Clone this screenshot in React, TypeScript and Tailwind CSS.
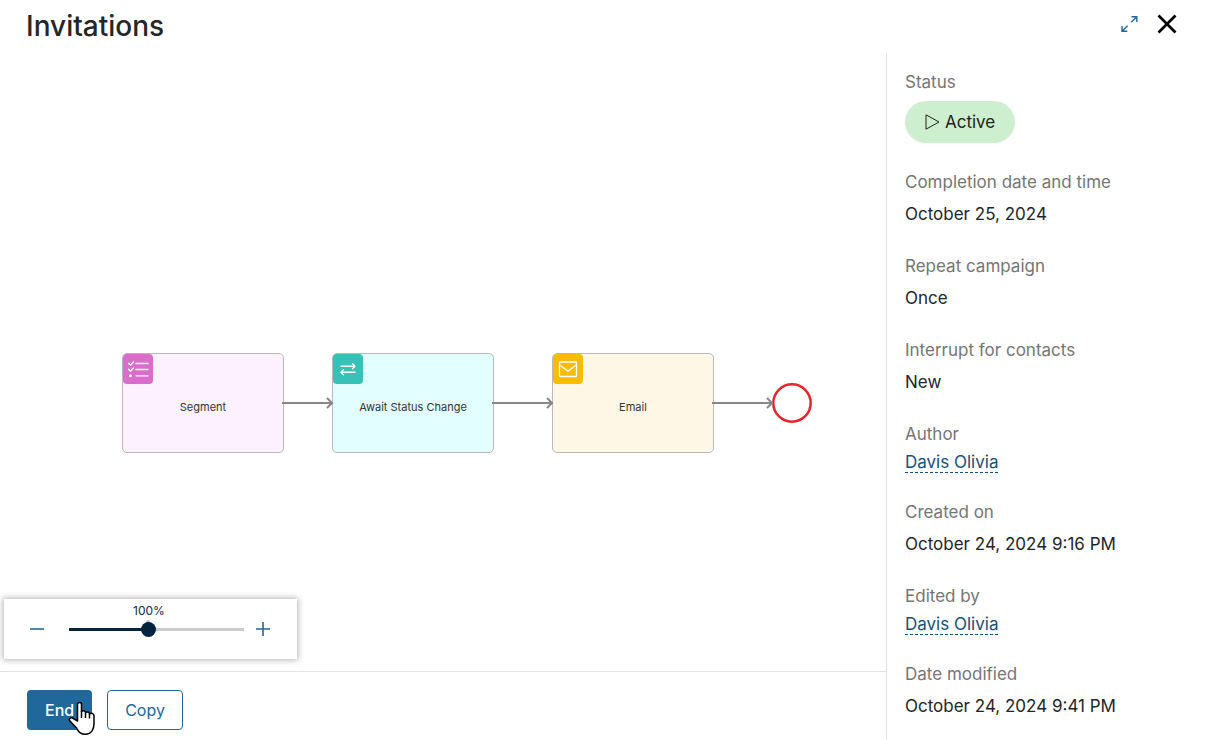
import { useState, type ReactNode } from "react";

function ChecklistIcon() {
  return (
    <svg width="30" height="30" viewBox="0 0 30 30" fill="none" stroke="white" strokeWidth="1.3" strokeLinecap="round" strokeLinejoin="round" aria-hidden="true">
      <path d="M5.500 9.200l2 2 3-3.200M5.500 15.200l2 2 3-3.200M13 9.500h12M13 15.500h12M13 21.800h12" />
      <circle cx="7.5" cy="21.800" r="0.9" fill="white" />
    </svg>
  );
}

function SwapIcon() {
  return (
    <svg width="30" height="30" viewBox="0 0 30 30" fill="none" stroke="white" strokeWidth="1.4" strokeLinecap="round" strokeLinejoin="round" aria-hidden="true">
      <path d="M8 12.200h14M19.500 9.700l2.500 2.500-2.500 2.500M22 18.300H8M10.500 15.800L8 18.300l2.500 2.500" />
    </svg>
  );
}

function MailIcon() {
  return (
    <svg width="30" height="30" viewBox="0 0 30 30" fill="none" stroke="white" strokeWidth="1.3" strokeLinejoin="round" aria-hidden="true">
      <rect x="6.500" y="8" width="17" height="14.500" rx="0.800" />
      <path d="M6.800 11l8.200 6.200 8.200-6.200" />
    </svg>
  );
}

type NodeProps = { label: string; place: string; tile: string; icon: ReactNode };

function CampaignNode({ label, place, tile, icon }: NodeProps) {
  return (
    <div className={`absolute top-[300px] flex h-[100px] w-[162px] items-center justify-center rounded-[5px] border border-[#b9b9b9] pt-2 ${place}`}>
      <span className={`absolute top-0 left-0 rounded-[4px] ${tile}`}>{icon}</span>
      <span className="text-[11px] leading-4 text-[#333333]">{label}</span>
    </div>
  );
}

function Connector({ place, length }: { place: string; length: number }) {
  return (
    <svg className={`absolute top-[343px] z-10 ${place}`} width={length} height="14" fill="none" stroke="#878787" strokeWidth="2" aria-hidden="true">
      <path d={`M0 7H${length - 1}M${length - 7} 2l5 5-5 5`} />
    </svg>
  );
}

function Field({ label, children }: { label: string; children: ReactNode }) {
  return (
    <div className="mb-[30px]">
      <dt className="text-[17px] leading-[22px] text-[#757575]">{label}</dt>
      {children}
    </div>
  );
}

function Value({ children }: { children: ReactNode }) {
  return <dd className="mt-[10px] text-[17px] leading-[22px] text-[#212529]">{children}</dd>;
}

function Person({ name }: { name: string }) {
  return (
    <dd className="mt-[6px] flex h-5 text-[17px] leading-[22px]">
      <a href="#" className="h-[22px] border-b border-dashed border-[#164f7a] text-[#164f7a]">{name}</a>
    </dd>
  );
}

function PointerHand() {
  return (
    <svg className="absolute top-[11px] left-[41px]" width="28" height="35" viewBox="0 0 28 35" aria-hidden="true">
      <path
        d="M9.500 3.500c0-2.700 4-2.700 4 0v7c1-1.200 3.700-1 4 1 1.200-1 3.700-.6 4 1.300 1.500-1 4.500-.4 4.500 2v8c0 5-2.500 10.500-8.500 10.500-5.500 0-7-3-9-6.300l-6.800-7.200c-1.200-2 .8-3.400 2.800-2.800l5 3z"
        fill="white" stroke="black" strokeWidth="1.500" strokeLinejoin="round"
      />
      <path d="M13.500 10v7M17.500 11.500V17M21.500 13v4.500" fill="none" stroke="black" strokeWidth="1.500" />
    </svg>
  );
}

const MIN = 10;
const MAX = 210;

function ZoomPanel() {
  const [zoom, setZoom] = useState(100);
  const filled = ((zoom - MIN) / (MAX - MIN)) * 100;
  return (
    <div className="absolute bottom-3 left-1 z-20 flex h-[60px] w-[293px] items-center bg-white px-[23px] shadow-[0_0_6px_1px_rgba(0,0,0,0.3)]">
      <button type="button" aria-label="Zoom out" onClick={() => setZoom(Math.max(MIN, zoom - 10))} className="flex h-5 w-5 justify-center text-[#20689b]">
        <svg width="16" height="20" fill="none" stroke="currentColor" strokeWidth="1.600" aria-hidden="true">
          <path d="M1 10h14" />
        </svg>
      </button>
      <div className="relative mr-[9px] ml-[22px] flex h-5 w-[175px] items-center">
        <label htmlFor="zoom" className="absolute -top-4 left-16 text-xs leading-4 text-[#0b2a4a]">{zoom}%</label>
        <span className="absolute top-px left-[77px] h-1 w-1 rounded-full bg-[#bfbfbf]" />
        <input
          id="zoom"
          type="range"
          min={MIN}
          max={MAX}
          value={zoom}
          onChange={(event) => setZoom(Number(event.target.value))}
          style={{ backgroundImage: `linear-gradient(to right, #03233f ${filled}%, #cbcbcb ${filled}%)` }}
          className="relative h-[3px] w-full appearance-none [&::-webkit-slider-thumb]:h-[15px] [&::-webkit-slider-thumb]:w-[15px] [&::-webkit-slider-thumb]:appearance-none [&::-webkit-slider-thumb]:rounded-full [&::-webkit-slider-thumb]:bg-[#03233f]"
        />
      </div>
      <button type="button" aria-label="Zoom in" onClick={() => setZoom(Math.min(MAX, zoom + 10))} className="flex h-5 w-5 justify-center text-[#20689b]">
        <svg width="16" height="20" fill="none" stroke="currentColor" strokeWidth="1.600" aria-hidden="true">
          <path d="M1 10h14M8 3v14" />
        </svg>
      </button>
    </div>
  );
}

export default function App() {
  return (
    <div className="flex min-h-screen flex-col bg-white font-['Inter',sans-serif] text-[#212529]">
      <header className="flex h-[53px] items-center justify-between pr-[30px] pb-1.5 pl-[26px]">
        <h1 className="pt-1 text-[28px] leading-8 font-medium text-[#262626]">Invitations</h1>
        <div className="flex items-center gap-[18px]">
          <button type="button" aria-label="Expand" className="text-[#20689b]">
            <svg width="18" height="18" viewBox="0 0 18 18" fill="none" stroke="currentColor" strokeWidth="1.400" aria-hidden="true">
              <path d="M10.500 1.700h5.300V7M15.800 1.700l-5.600 5.600M1 11v5.300h5.300M1 16.300l5.600-5.600" />
            </svg>
          </button>
          <button type="button" aria-label="Close" className="text-black">
            <svg width="20" height="20" viewBox="0 0 20 20" fill="none" stroke="currentColor" strokeWidth="2.700" aria-hidden="true">
              <path d="M1.500 1.500l17 17M18.500 1.500l-17 17" />
            </svg>
          </button>
        </div>
      </header>
      <div className="flex flex-1">
        <main className="flex min-w-0 flex-1 flex-col">
          <div className="relative flex-1">
            <CampaignNode label="Segment" place="left-[122px] bg-[#fdf0ff]" tile="bg-[#da6dcb]" icon={<ChecklistIcon />} />
            <Connector place="left-[282px]" length={52} />
            <CampaignNode label="Await Status Change" place="left-[332px] bg-[#e2feff]" tile="bg-[#36c2b7]" icon={<SwapIcon />} />
            <Connector place="left-[492px]" length={62} />
            <CampaignNode label="Email" place="left-[552px] bg-[#fff7e5]" tile="bg-[#f9bc02]" icon={<MailIcon />} />
            <Connector place="left-[712px]" length={62} />
            <svg className="absolute top-[330px] left-[772px]" width="40" height="40" fill="white" stroke="#e5252c" strokeWidth="2.500" aria-hidden="true">
              <circle cx="20" cy="20" r="18.700" />
            </svg>
            <ZoomPanel />
          </div>
          <footer className="flex h-[69px] items-center gap-[15px] border-t border-[#e3e3e3] px-[27px] pt-2">
            <div className="relative flex">
              <button type="button" className="h-10 rounded-[4px] bg-[#20689b] px-[18px] text-base font-medium text-white">End</button>
              <PointerHand />
            </div>
            <button type="button" className="h-10 rounded-[4px] border border-[#20689b] px-[17px] text-base text-[#20689b]">Copy</button>
          </footer>
        </main>
        <aside className="w-[321px] border-l border-[#e3e3e3] pt-[18px] pl-[18px]">
          <dl className="-mb-[30px]">
            <div className="mb-7">
              <dt className="text-[17px] leading-[22px] text-[#757575]">Status</dt>
              <dd className="mt-2 flex">
                <span className="flex h-[42px] items-center gap-[5px] rounded-full bg-[#cdefd0] px-5 text-[17px] leading-[22px] text-[#212121]">
                  <svg width="15" height="16" viewBox="0 0 15 16" fill="none" stroke="currentColor" strokeLinejoin="round" aria-hidden="true">
                    <path d="M1 0.800v14.400L14 8z" />
                  </svg>
                  Active
                </span>
              </dd>
            </div>
            <Field label="Completion date and time"><Value>October 25, 2024</Value></Field>
            <Field label="Repeat campaign"><Value>Once</Value></Field>
            <Field label="Interrupt for contacts"><Value>New</Value></Field>
            <Field label="Author"><Person name="Davis Olivia" /></Field>
            <Field label="Created on"><Value>October 24, 2024 9:16 PM</Value></Field>
            <Field label="Edited by"><Person name="Davis Olivia" /></Field>
            <Field label="Date modified"><Value>October 24, 2024 9:41 PM</Value></Field>
          </dl>
        </aside>
      </div>
    </div>
  );
}
